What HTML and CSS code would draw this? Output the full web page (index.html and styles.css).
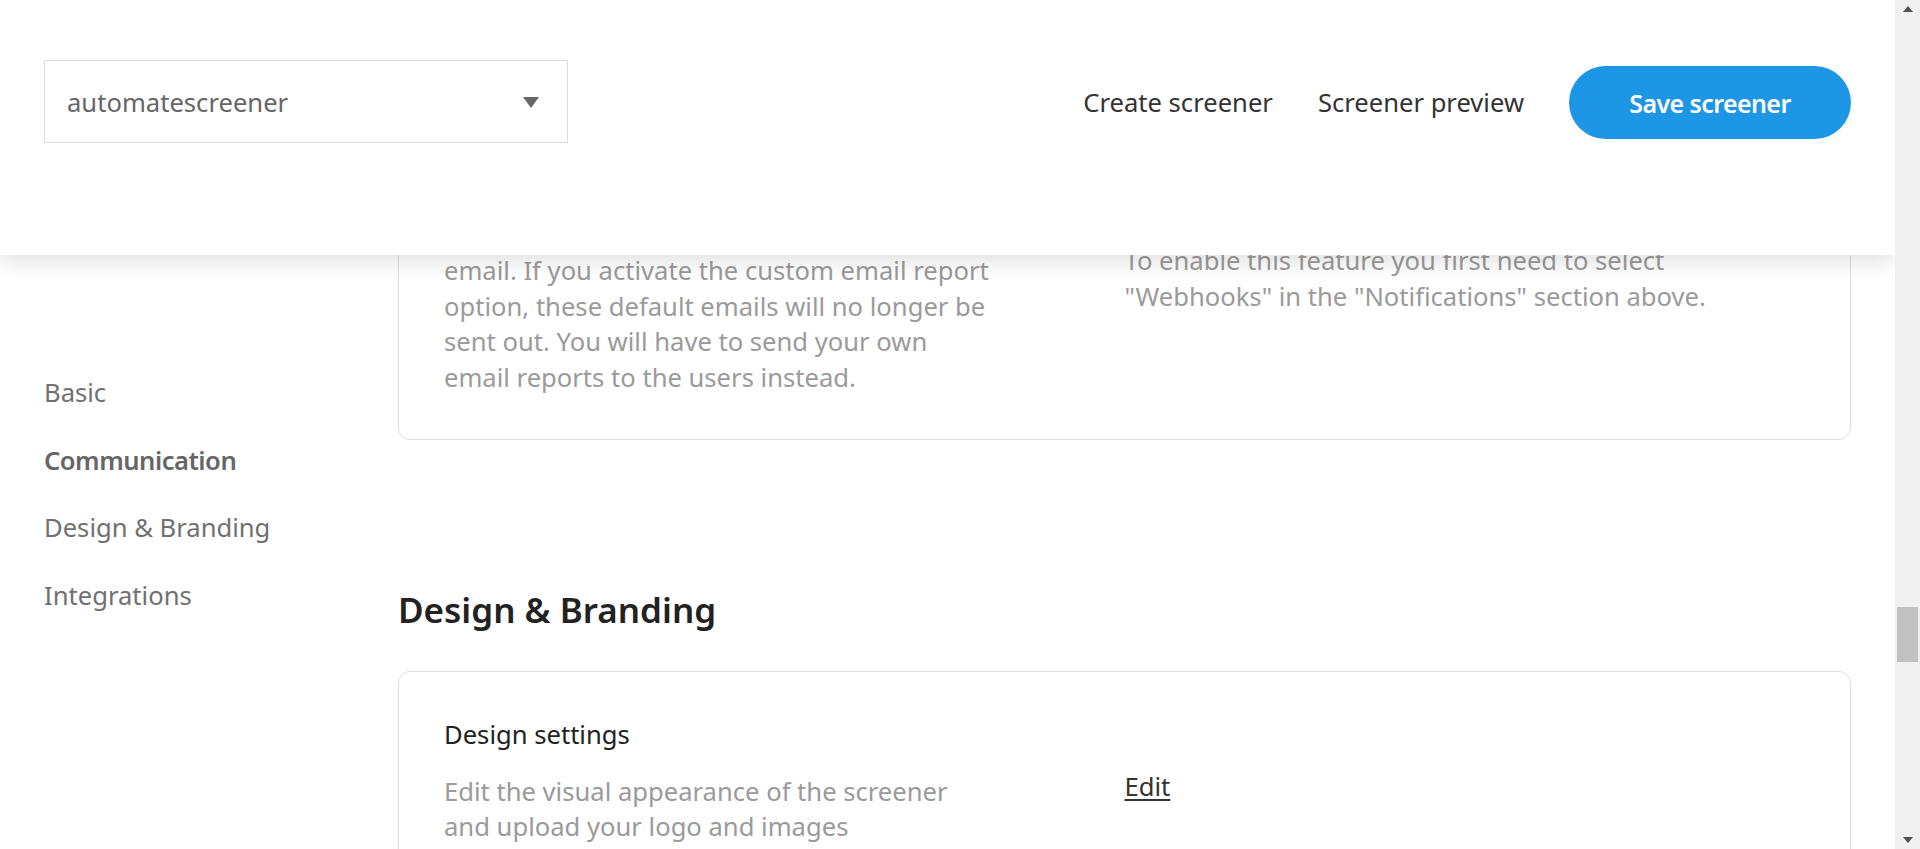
FILE: index.html
```html
<!DOCTYPE html>
<html lang="en">
<head>
<meta charset="utf-8">
<title>Screener settings</title>
<link rel="stylesheet" href="styles.css">
</head>
<body>
<div class="app">
  <div class="viewport">
    <header class="topbar">
      <div class="select">
        <span class="select-value">automatescreener</span>
        <svg class="select-arrow" width="16" height="11" viewBox="0 0 16 11"><path d="M0 0H16L8 11Z" fill="#666"/></svg>
      </div>
      <nav class="topnav">
        <a class="topnav-link">Create screener</a>
        <a class="topnav-link">Screener preview</a>
        <button class="save-btn">Save screener</button>
      </nav>
    </header>

    <div class="page">
      <aside class="sidebar">
        <a class="side-link">Basic</a>
        <a class="side-link active">Communication</a>
        <a class="side-link">Design &amp; Branding</a>
        <a class="side-link">Integrations</a>
      </aside>

      <main class="content">
        <section class="card card-comm">
          <div class="col col-left">
            <p class="desc">email. If you activate the custom email report option, these default emails will no longer be sent out. You will have to send your own email reports to the users instead.</p>
          </div>
          <div class="col col-right">
            <p class="desc">To enable this feature you first need to select "Webhooks" in the "Notifications" section above.</p>
          </div>
        </section>

        <h2 class="section-title">Design &amp; Branding</h2>

        <section class="card card-design">
          <h3 class="setting-title">Design settings</h3>
          <div class="setting-row">
            <div class="col col-left">
              <p class="desc">Edit the visual appearance of the screener and upload your logo and images</p>
            </div>
            <div class="col col-right">
              <a class="edit-link">Edit</a>
            </div>
          </div>
        </section>
      </main>
    </div>
  </div>

  <div class="scrollbar">
    <svg class="sb-arrow" width="10" height="6" viewBox="0 0 10 6"><path d="M0 6H10L5 0Z" fill="#505050"/></svg>
    <div class="sb-track"><div class="sb-thumb"></div></div>
    <svg class="sb-arrow" width="10" height="6" viewBox="0 0 10 6"><path d="M0 0H10L5 6Z" fill="#505050"/></svg>
  </div>
</div>
</body>
</html>
```

FILE: styles.css
```css
* { box-sizing: border-box; }
html, body { margin: 0; padding: 0; height: 100%; overflow: hidden; background: #fff; }
body { font-family: "Noto Sans", "Open Sans", sans-serif; color: #333; }

.app { display: flex; width: 1920px; height: 849px; }
.viewport { position: relative; flex: 1; height: 849px; overflow: hidden; background: #fff; }

/* header overlay */
.topbar {
  position: absolute; top: 0; left: 0; right: 0; height: 255px; z-index: 10;
  background: #fff;
  box-shadow: 0 6px 22px rgba(0,0,0,0.13);
  display: flex; align-items: flex-start; justify-content: space-between;
  padding: 60px 44px 0 44px;
}
.select {
  width: 524px; height: 83px; border: 1px solid #dcdcdc; background: #fff;
  display: flex; align-items: center; justify-content: space-between;
  padding: 1px 28px 0 22px;
}
.select-value { font-size: 25.6px; color: #666; }
.select-arrow { display: block; }
.topnav { display: flex; align-items: center; height: 83px; padding-top: 2px; }
.topnav-link { font-size: 25.6px; color: #333; margin-right: 45px; text-decoration: none; }
.save-btn {
  width: 282px; height: 73px; border: 0; border-radius: 37px; background: #1e96e6;
  color: #fff; font-family: inherit; font-size: 25px; font-weight: 600; letter-spacing: -0.6px;
  padding-top: 2px;
}

/* page */
.page { display: flex; padding: 0 44px; }
.sidebar { width: 354px; flex: none; padding-top: 375px; display: flex; flex-direction: column; }
.side-link { font-size: 25.6px; line-height: 35px; color: #707070; margin-bottom: 32.6px; text-decoration: none; }
.side-link.active { font-weight: 600; color: #666; letter-spacing: -0.5px; }

.content { flex: 1; padding-top: 198px; }
.card { border: 1px solid #dedede; border-radius: 12px; padding: 44px 45px; }
.card-comm { display: flex; align-items: flex-start; }
.col { flex: 1 1 0; min-width: 0; }
.col-left { padding-top: 10px; }
.card-comm .col-right { padding-top: 0; }
.desc { margin: 0; font-size: 25.6px; line-height: 35.5px; color: #9a9a9a; max-width: 550px; }
.col-right .desc { max-width: 600px; }

.section-title { margin: 150px 0 41px 0; font-size: 35px; line-height: 40px; font-weight: 600; color: #222; }

.card-design { padding-top: 45px; }
.setting-title { margin: 0; font-size: 25.6px; line-height: 35.5px; font-weight: 400; color: #222; }
.setting-row { display: flex; align-items: flex-start; margin-top: 16px; }
.setting-row .col-left { padding-top: 5px; }
.edit-link { font-size: 25.6px; line-height: 35.5px; color: #333; text-decoration: underline; text-underline-offset: 3px; }

/* fake scrollbar */
.scrollbar { width: 25px; flex: none; height: 849px; background: #f0f0f0; display: flex; flex-direction: column; align-items: center; }
.sb-arrow { display: block; flex: none; margin: 6px 0; }
.sb-track { flex: 1; width: 100%; position: relative; }
.sb-thumb { position: absolute; left: 2px; right: 2px; top: 589px; height: 55px; background: #c1c1c1; }
```
